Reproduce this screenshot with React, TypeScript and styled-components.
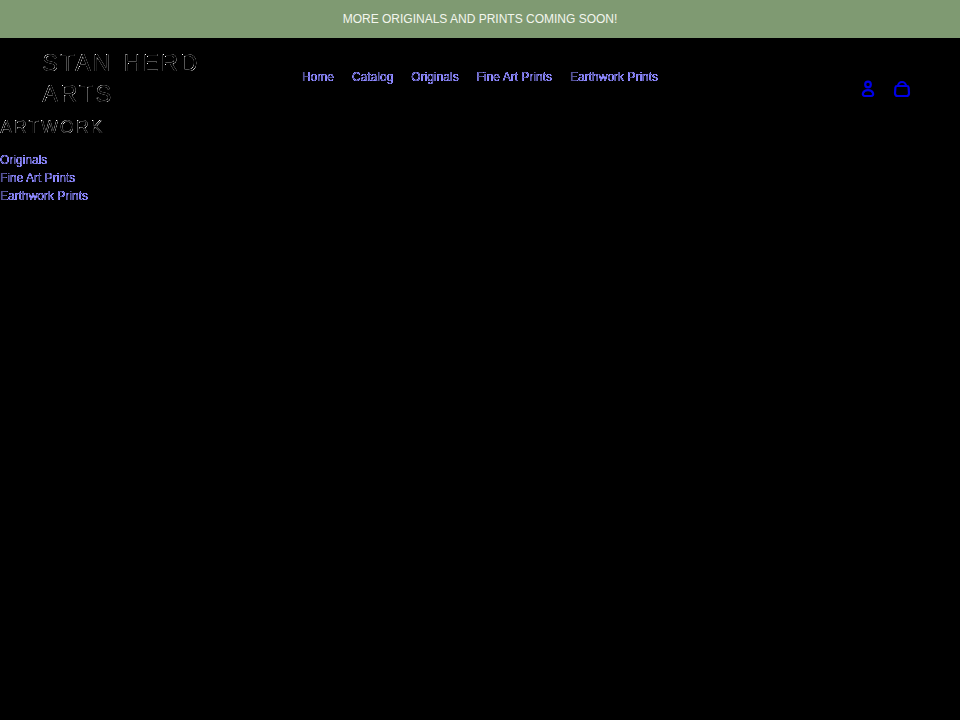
import React from 'react';
import styled, { createGlobalStyle } from 'styled-components';

const GlobalStyle = createGlobalStyle`
  html, body {
    margin: 0;
    min-height: 100%;
    background-color: #000;
    font-family: 'Liberation Sans', Arial, sans-serif;
  }
`;

// the dark text only shows at its slanted edges, straight stems and bars fade out
const FilterDefs = styled.svg`
  position: absolute;
  width: 0;
  height: 0;
`;

const Announcement = styled.div`
  height: 38px;
  display: flex;
  align-items: center;
  justify-content: center;
  background-color: #7f9a72;
  color: #f3f6ee;
  font-size: 12px;
`;

const Header = styled.header`
  display: grid;
  grid-template-columns: 1fr auto 1fr;
  align-items: center;
  height: 78px;
  padding: 0 42px;
`;

const Logo = styled.a`
  display: block;
  width: 190px;
  margin-top: 2px;
  color: #fff;
  font-size: 24px;
  line-height: 31px;
  letter-spacing: 1.92px;
  word-spacing: 3px;
  filter: url(#slants);
`;

const Nav = styled.nav`
  display: flex;
  gap: 18px;
`;

const NavLink = styled.a`
  color: #8d88ff;
  font-size: 12px;
  filter: url(#outline);
`;

const Icons = styled.div`
  display: flex;
  justify-content: flex-end;
  gap: 14px;
  padding-right: 6px;
  margin-top: 23px;
`;

const IconLink = styled.a`
  width: 20px;
  height: 20px;
  color: #0000e6;
`;

const Section = styled.main`
  margin-top: -1px;
`;

const Title = styled.h1`
  margin: 0 0 12px;
  color: #fff;
  font-size: 18px;
  font-weight: 400;
  line-height: 24px;
  letter-spacing: 1.8px;
  filter: url(#slants);
`;

const LinkList = styled.ul`
  margin: 0;
  padding: 0;
  list-style: none;
`;

const ListLink = styled.li`
  color: #8d88ff;
  font-size: 12px;
  line-height: 18px;
  filter: url(#outline);
`;

const App: React.FC = () => (
  <>
    <GlobalStyle />
    <FilterDefs aria-hidden='true'>
      <filter id='slants' colorInterpolationFilters='sRGB'>
        <feOffset in='SourceGraphic' dx='1' dy='0' result='right' />
        <feOffset in='SourceGraphic' dx='0' dy='1' result='down' />
        <feComposite in='SourceGraphic' in2='right' operator='xor' result='across' />
        <feComposite in='SourceGraphic' in2='down' operator='xor' result='along' />
        <feComposite in='across' in2='along' operator='in' result='edges' />
        <feComponentTransfer in='edges'>
          <feFuncA type='table' tableValues='0 0.4 1 1' />
        </feComponentTransfer>
      </filter>
      <filter id='outline' colorInterpolationFilters='sRGB'>
        <feComponentTransfer>
          <feFuncA type='table' tableValues='0 1 1 0.6' />
        </feComponentTransfer>
      </filter>
    </FilterDefs>
    <Announcement>MORE ORIGINALS AND PRINTS COMING SOON!</Announcement>
    <Header>
      <Logo>STAN HERD ARTS</Logo>
      <Nav>
        {['Home', 'Catalog', 'Originals', 'Fine Art Prints', 'Earthwork Prints'].map((label) => (
          <NavLink key={label}>{label}</NavLink>
        ))}
      </Nav>
      <Icons>
        <IconLink>
          <svg width='20' height='20' viewBox='0 0 20 20' fill='none' stroke='currentColor' strokeWidth='2.2'>
            <circle cx='10' cy='5.500' r='2.800' />
            <path d='M7 17h6c1.800 0 2.600-1.300 2-2.800-.7-1.800-2.700-3-5-3s-4.300 1.200-5 3c-.6 1.500.2 2.800 2 2.800z' />
          </svg>
        </IconLink>
        <IconLink>
          <svg width='20' height='20' viewBox='0 0 20 20' fill='none' stroke='currentColor' strokeWidth='2.2'>
            <path d='M6 8V7a4 4 0 0 1 8 0v1' />
            <path d='M5 7h10c1 0 1.500.6 1.600 1.500l.4 5.500c.1 1.800-1 3-2.500 3h-9c-1.500 0-2.600-1.200-2.500-3l.4-5.500C3.500 7.600 4 7 5 7z' />
          </svg>
        </IconLink>
      </Icons>
    </Header>
    <Section>
      <Title>ARTWORK</Title>
      <LinkList>
        {['Originals', 'Fine Art Prints', 'Earthwork Prints'].map((label) => (
          <ListLink key={label}>{label}</ListLink>
        ))}
      </LinkList>
    </Section>
  </>
);

export default App;
